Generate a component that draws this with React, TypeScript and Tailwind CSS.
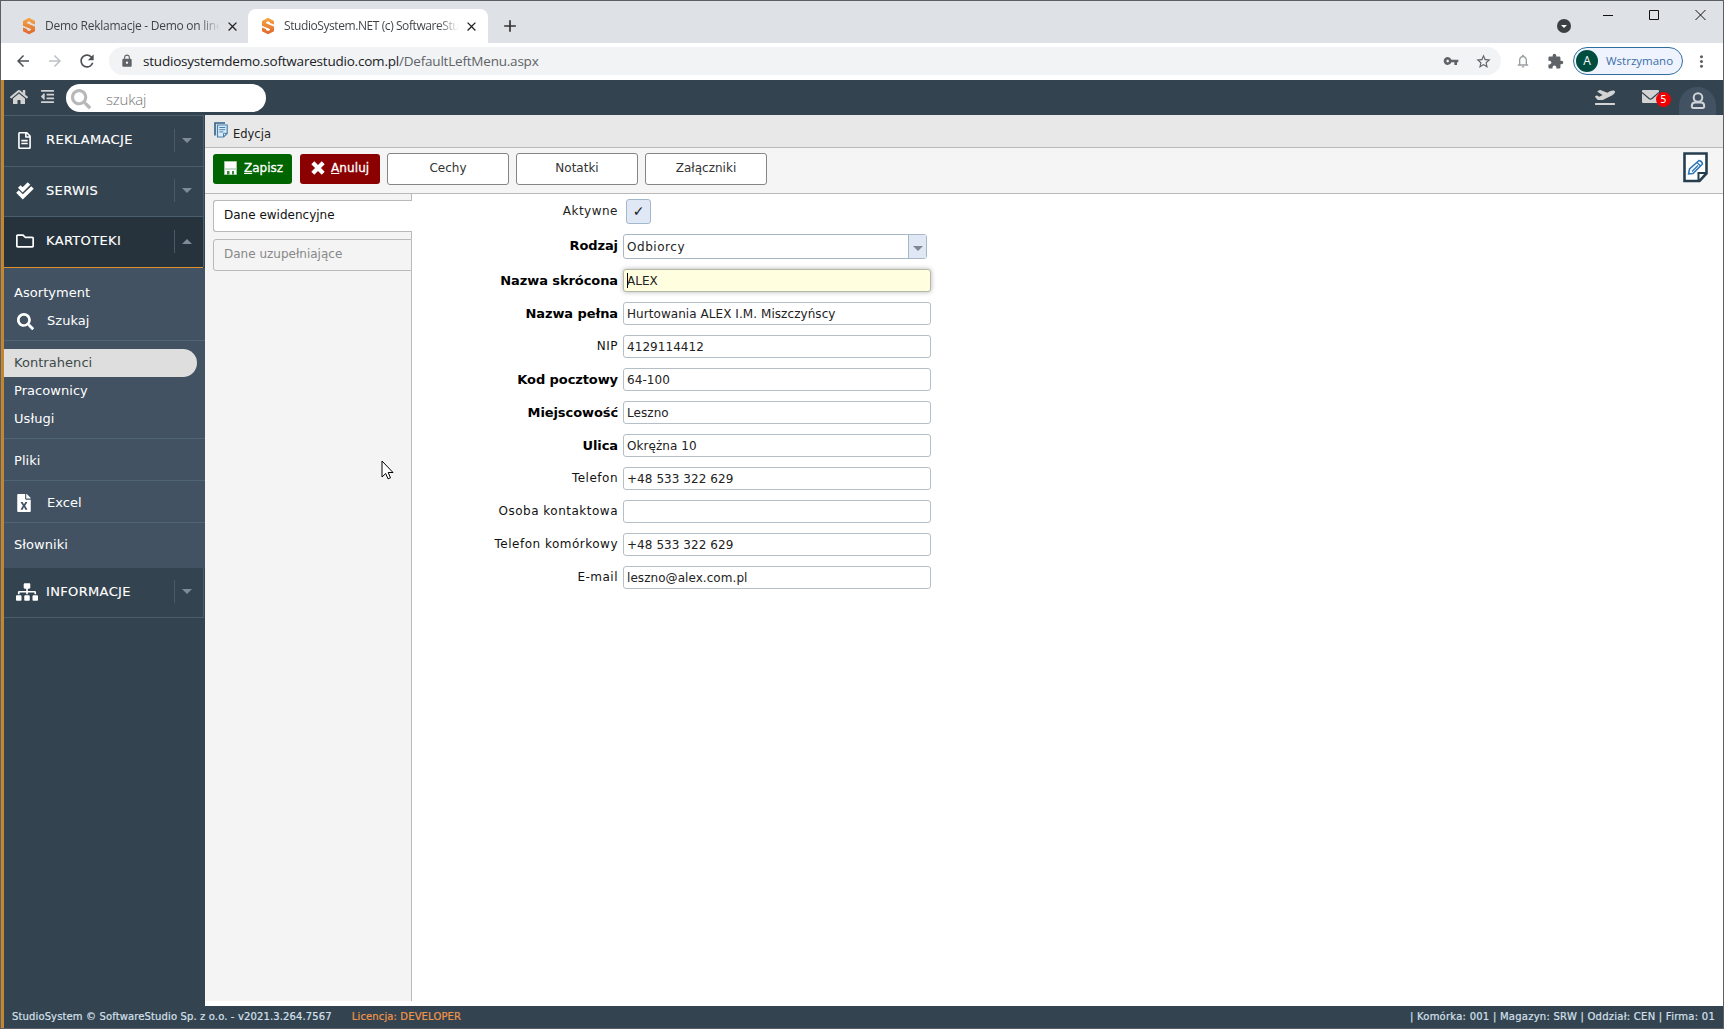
import type { ReactNode } from 'react'
import { clsx } from 'clsx'
import { FaHome, FaOutdent, FaSearch, FaRegFileAlt, FaRegFolder, FaSitemap, FaFileExcel, FaPlaneDeparture } from 'react-icons/fa'
import { MdArrowBack, MdArrowForward, MdExtension, MdLock, MdMoreVert, MdNotificationsNone, MdRefresh, MdStarBorder, MdVpnKey, MdClose, MdAdd } from 'react-icons/md'

type Field = { label: string; value: string; bold?: boolean }

const FIELDS: Field[] = [
  { label: 'Nazwa pełna', value: 'Hurtowania ALEX I.M. Miszczyńscy', bold: true },
  { label: 'NIP', value: '4129114412' },
  { label: 'Kod pocztowy', value: '64-100', bold: true },
  { label: 'Miejscowość', value: 'Leszno', bold: true },
  { label: 'Ulica', value: 'Okrężna 10', bold: true },
  { label: 'Telefon', value: '+48 533 322 629' },
  { label: 'Osoba kontaktowa', value: '' },
  { label: 'Telefon komórkowy', value: '+48 533 322 629' },
  { label: 'E-mail', value: 'leszno@alex.com.pl' },
]

function StudioLogo() {
  return (
    <svg width="14" height="18" viewBox="0 0 14 18" className="shrink-0" fill="none">
      <defs>
        <linearGradient id="logo" x1="0" y1="0" x2="0" y2="1">
          <stop offset="0" stopColor="#f5a742" />
          <stop offset="1" stopColor="#e0662b" />
        </linearGradient>
      </defs>
      <path d="M7 .8 13 4v3.500L9 6V5.200L7 4.300 5 5.200v1L13 9.500v4.700L7 17.300 1 14.200V10.500L5 12v1l2 .9 2-.9v-.9L1 8.700V4Z" fill="url(#logo)" />
    </svg>
  )
}

function DoubleCheckIcon() {
  return (
    <svg width="18" height="18" viewBox="0 0 18 18" fill="none" stroke="#fff" strokeWidth="3.700">
      <path d="M3.300 4.500 6.600 7.800 13 1.500" />
      <path d="M1.500 9.500 6.800 14.800 16.500 5.500" />
    </svg>
  )
}

function UserIcon() {
  return (
    <svg width="16" height="18" viewBox="0 0 16 18" fill="none" stroke="#d0d4d8" strokeWidth="2">
      <circle cx="8" cy="5.500" r="4.300" />
      <path d="M4.800 10.500h6.400c2 0 3 1.700 3 3.500 0 1.500-.6 2-1.600 2H3.400c-1 0-1.600-.5-1.600-2 0-1.800 1-3.500 3-3.500Z" />
    </svg>
  )
}

function MailIcon() {
  return (
    <svg width="17" height="13" viewBox="0 0 17 13" className="-mt-[3px]">
      <rect width="17" height="13" rx="1" fill="#d3d3d3" />
      <path d="M0 2.500 7 8.500q1.500 1.100 3 0l7-6" fill="none" stroke="#33434f" strokeWidth="1.200" />
    </svg>
  )
}

function PagesIcon() {
  return (
    <svg width="14" height="16" viewBox="0 0 14 16" fill="none">
      <path d="M1 13.500V1h10" stroke="#2f5f86" strokeWidth="1.600" />
      <path d="M3.500 3h9.700v8.500L9.700 15H3.500Z" fill="#d8ebfa" stroke="#4a80ab" strokeWidth="1.200" />
      <path d="M5.300 5.500h6M5.300 7.700h6M5.300 9.900h4" stroke="#4a80ab" />
      <path d="M9.500 15v-3.700h3.700" stroke="#4a80ab" />
    </svg>
  )
}

function FloppyIcon() {
  return (
    <svg width="13" height="14" viewBox="0 0 13 14">
      <path d="M.5.500h12v13H.5Z" fill="#fff" stroke="#a5c9a5" />
      <path d="M1 8h11" stroke="#8fbb8f" />
      <path d="M3 10h7v3.500H3Z" fill="#3f863f" />
      <path d="M5.500 10H8v3.500H5.500Z" fill="#fff" />
    </svg>
  )
}

function EditNoteIcon() {
  return (
    <svg width="25" height="31" viewBox="0 0 25 31" fill="none">
      <path d="M1.500 1.500h22v20l-7 7.500h-15Z" fill="#fff" stroke="#263f4f" strokeWidth="2.600" />
      <path d="M15.500 29v-8h8" stroke="#263f4f" strokeWidth="2" />
      <path d="m5.500 22 1-5L16 8.500q3 .5 3.500 3.500L10 21.500Z" fill="#f2f9ff" stroke="#2e75b6" strokeWidth="1.500" />
      <path d="m14 10.500 3.500 3.500M9 19.500l6-6" stroke="#2e75b6" strokeWidth="1.200" />
    </svg>
  )
}

function Triangle({ up, className }: { up?: boolean; className?: string }) {
  return (
    <svg width="10" height="5" viewBox="0 0 10 5" className={className} fill="currentColor">
      <path d={up ? 'M0 5 5 0l5 5Z' : 'M0 0h10L5 5Z'} />
    </svg>
  )
}

function BrowserTab({ title, active }: { title: string; active?: boolean }) {
  return (
    <div
      className={clsx(
        'flex h-[34px] items-center',
        active ? 'w-[240px] rounded-t-lg bg-white pl-[13px] tracking-[-0.42px]' : 'w-[247px] pl-[21px] tracking-[-0.26px]',
      )}
    >
      <StudioLogo />
      <div className="ml-[9px] w-[175px] whitespace-nowrap bg-linear-to-r from-[#3c4043] from-88% to-transparent bg-clip-text text-[12px] text-transparent">
        {title}
      </div>
      <MdClose className="ml-[5px] size-[15px] shrink-0 text-[#222]" />
    </div>
  )
}

function BrowserChrome() {
  return (
    <div className="shrink-0 font-['Open_Sans',sans-serif]">
      <div className="flex h-[42px] bg-[#dee1e6] pt-2">
        <BrowserTab title="Demo Reklamacje - Demo on line" />
        <BrowserTab title="StudioSystem.NET (c) SoftwareStu" active />
        <MdAdd className="mt-[7px] ml-[12px] size-[20px] text-[#333]" />
        <div className="ml-auto flex pr-[17px]">
          <div className="mt-[10px] mr-[32px] flex size-[14px] items-center justify-center rounded-full bg-[#3c4043] text-white">
            <Triangle className="w-[6px]" />
          </div>
          <svg width="103" height="12" viewBox="0 0 103 12" fill="none" stroke="#111">
            <path d="M0 6.500h10M92.500 1l10 10M102.500 1l-10 10" />
            <path d="M46.500 1.500h9v9h-9Z" />
          </svg>
        </div>
      </div>
      <div className="flex h-[37px] items-center bg-white pb-[1px] text-[#5f6368]">
        <MdArrowBack className="ml-[13px] size-[18px] text-[#4d5156]" />
        <MdArrowForward className="ml-[14px] size-[18px] text-[#bdc1c6]" />
        <MdRefresh className="ml-[13px] size-[20px] text-[#4d5156]" />
        <div className="ml-[12px] flex h-[28px] w-[1392px] items-center rounded-full bg-[#f1f3f4] pr-[9px] pl-[11px]">
          <MdLock className="size-[14px]" />
          <div className="ml-[9px] text-[13.500px] tracking-[-0.21px] whitespace-nowrap">
            <span className="text-[#202124]">studiosystemdemo.softwarestudio.com.pl</span>/DefaultLeftMenu.aspx
          </div>
          <MdVpnKey className="ml-auto size-[16px]" />
          <MdStarBorder className="ml-[16px] size-[17px]" />
        </div>
        <MdNotificationsNone className="ml-[14px] size-[16px] text-[#9a9da1]" />
        <MdExtension className="ml-[16px] size-[17px]" />
        <div className="ml-[9px] flex h-[28px] w-[110px] items-center rounded-full border border-[#2f6f9f] bg-[#eef3fd] pl-[2px]">
          <div className="flex size-[22px] items-center justify-center rounded-full bg-[#004d40] text-[12px] text-white">A</div>
          <span className="ml-[8px] text-[11.500px] text-[#3a6ea8]">Wstrzymano</span>
        </div>
        <MdMoreVert className="ml-[9px] size-[19px]" />
      </div>
    </div>
  )
}

function AppHeader() {
  return (
    <header className="flex h-[35px] shrink-0 items-center bg-[#33434f] text-[#d3d3d3]">
      <FaHome className="-mt-[2px] ml-[6px] size-[18px]" />
      <FaOutdent className="-mt-[2px] ml-[12px] size-[15px]" />
      <div className="ml-[11px] flex h-[28px] w-[200px] items-center rounded-full bg-white pl-[5px]">
        <FaSearch className="mt-[2px] size-[20px] text-[#b8b8b8]" />
        <span className="ml-[15px] pt-[3px] font-['Open_Sans',sans-serif] text-[15px] font-light tracking-[-0.2px] text-[#757575]">szukaj</span>
      </div>
      <FaPlaneDeparture className="-mt-[2px] ml-auto size-[20px]" />
      <div className="ml-[27px] flex items-center">
        <MailIcon />
        <span className="z-10 mt-[3px] -ml-[3px] flex size-[15px] items-center justify-center rounded-full bg-[#f00000] text-[10px] text-white">5</span>
      </div>
      <div className="mt-[7px] mr-[7px] ml-[8px] flex h-[28px] w-[37px] items-center justify-center rounded-t-full bg-[#425262]">
        <UserIcon />
      </div>
    </header>
  )
}

function MenuSection({ icon, label, open, className }: { icon: ReactNode; label: string; open?: boolean; className: string }) {
  return (
    <div className={clsx('flex w-[200px] items-center border-r border-r-[#495d6c] pb-[2px] text-white', className)}>
      <div className="ml-[12px] flex w-[30px] shrink-0">{icon}</div>
      <span className="text-[13px] tracking-[0.35px] [-webkit-text-stroke:0.15px]">{label}</span>
      <div className="mr-[4px] ml-auto flex h-[23px] w-[25px] items-center justify-center border-l border-[#4a5a67] text-[#7f8c97]">
        <Triangle up={open} />
      </div>
    </div>
  )
}

function MenuItem({ label, icon, selected }: { label: string; icon?: ReactNode; selected?: boolean }) {
  return (
    <div
      className={clsx(
        'flex h-[28px] items-center pl-[10px] text-[13px] tracking-[0.05px]',
        selected ? 'mr-[8px] rounded-r-full bg-[#dedede] text-[#3c4a4a]' : 'text-white',
      )}
    >
      {icon && <div className="ml-[3px] w-[30px]">{icon}</div>}
      {label}
    </div>
  )
}

function Sidebar() {
  return (
    <nav className="flex w-[201px] shrink-0 flex-col bg-[#33434f]">
      <MenuSection icon={<FaRegFileAlt className="size-[17px]" />} label="REKLAMACJE" className="h-[51px] border-t border-t-[#495d6c]" />
      <MenuSection icon={<DoubleCheckIcon />} label="SERWIS" className="h-[50px] border-t border-t-[#495d6c]" />
      <MenuSection icon={<FaRegFolder className="size-[18px]" />} label="KARTOTEKI" open className="h-[51px] border-t border-t-[#495d6c] bg-[#26323c]" />
      <div className="h-px w-[199px] shrink-0 bg-[#e0902c]" />
      <div className="flex h-[300px] flex-col bg-[#425262]">
        <div className="h-[73px] border-b border-[#4f6574] pt-[11px]">
          <MenuItem label="Asortyment" />
          <MenuItem label="Szukaj" icon={<FaSearch className="size-[17px]" />} />
        </div>
        <div className="h-[98px] border-b border-[#4f6574] pt-[8px]">
          <MenuItem label="Kontrahenci" selected />
          <MenuItem label="Pracownicy" />
          <MenuItem label="Usługi" />
        </div>
        <div className="h-[42px] border-b border-[#4f6574] pt-[8px]">
          <MenuItem label="Pliki" />
        </div>
        <div className="h-[42px] border-b border-[#4f6574] pt-[8px]">
          <MenuItem label="Excel" icon={<FaFileExcel className="h-[18px] w-[14px]" />} />
        </div>
        <div className="pt-[8px]">
          <MenuItem label="Słowniki" />
        </div>
      </div>
      <MenuSection icon={<FaSitemap className="size-[22px]" />} label="INFORMACJE" className="h-[50px] border-b border-b-[#495d6c]" />
    </nav>
  )
}

function ActionBar() {
  const plain = 'flex h-[32px] w-[122px] justify-center rounded-[3px] border border-[#858585] bg-white pt-[5px] text-[12px] text-[#333]'
  return (
    <div className="flex h-[46px] shrink-0 border-b border-[#b9b9b9] bg-[#f5f5f5] pt-[5px] pl-[8px]">
      <button className="mt-px flex h-[30px] w-[79px] items-center rounded-[3px] bg-[#006400] pb-[2px] pl-[11px] text-[12px] text-white [-webkit-text-stroke:0.3px]">
        <FloppyIcon />
        <span className="ml-[7px]"><u>Z</u>apisz</span>
      </button>
      <button className="mt-px ml-[8px] flex h-[30px] w-[80px] items-center rounded-[3px] bg-[#8b0000] pb-[2px] pl-[11px] text-[12px] text-white [-webkit-text-stroke:0.3px]">
        <svg width="14" height="14" viewBox="0 0 14 14" stroke="#fff" strokeWidth="4.200">
          <path d="m1.800 1.800 10.400 10.400M12.200 1.800 1.800 12.200" />
        </svg>
        <span className="ml-[6px] tracking-[0.1px]"><u>A</u>nuluj</span>
      </button>
      <button className={clsx(plain, 'ml-[7px]')}>Cechy</button>
      <button className={clsx(plain, 'ml-[7px]')}>Notatki</button>
      <button className={clsx(plain, 'ml-[7px]')}>Załączniki</button>
      <div className="-mt-px mr-[15px] ml-auto"><EditNoteIcon /></div>
    </div>
  )
}

function SideTabs() {
  return (
    <div className="flex h-[807px] w-[207px] shrink-0 flex-col bg-[#f4f4f4] pl-[8px]">
      <div className="h-[6px] border-r border-[#b9b9b9]" />
      <div className="h-[32px] rounded-l-[3px] border border-r-0 border-[#b9b9b9] bg-white pt-[5px] pl-[10px] text-[12px] text-[#111]">Dane ewidencyjne</div>
      <div className="h-[7px] border-r border-[#b9b9b9]" />
      <div className="h-[32px] rounded-l-[3px] border border-[#b9b9b9] pt-[5px] pl-[10px] text-[12px] text-[#888]">Dane uzupełniające</div>
      <div className="grow border-r border-[#b9b9b9]" />
    </div>
  )
}

function FormRow({ label, bold, children }: { label: string; bold?: boolean; children: ReactNode }) {
  return (
    <div className="flex h-[33px]">
      <label className={clsx('w-[206px] pt-[2px] text-right', bold ? 'text-[13px] font-bold tracking-[-0.09px] text-black' : 'text-[12px] tracking-[0.5px] text-[#111]')}>{label}</label>
      <div className="ml-[5px]">{children}</div>
    </div>
  )
}

function EditForm() {
  return (
    <div className="grow bg-white pt-[5px] text-[12px] text-[#222]">
      <div className="flex h-[35px]">
        <span className="w-[206px] pt-[3px] text-right tracking-[0.5px]">Aktywne</span>
        <span className="ml-[8px] flex h-[25px] w-[25px] items-center justify-center rounded-[3px] border border-[#a3b8cc] bg-[#e0e8f5] text-[14px]">✓</span>
      </div>
      <FormRow label="Rodzaj" bold>
        <div className="flex h-[25px] w-[304px] rounded-[3px] border border-[#a9b7c4]">
          <span className="grow pt-[3px] pl-[3px] tracking-[0.55px]">Odbiorcy</span>
          <span className="flex w-[18px] items-center justify-center border-l border-[#a9b7c4] bg-[#e0e8f5] pt-[3px] text-[#7f8790]"><Triangle /></span>
        </div>
      </FormRow>
      <div className="mt-[2px]">
        <FormRow label="Nazwa skrócona" bold>
          <div className="flex h-[23px] w-[308px] items-center rounded-[3px] border border-[#b3b8a8] bg-[#ffffe0] pl-[3px] shadow-[0_0_5px_rgba(0,0,0,0.3)]">
            <span className="-mr-px h-[15px] w-px bg-black" />ALEX
          </div>
        </FormRow>
        {FIELDS.map((f) => (
          <FormRow key={f.label} label={f.label} bold={f.bold}>
            <div className="flex h-[23px] w-[308px] items-center rounded-[3px] border border-[#b5bfc7] pl-[3px] tracking-[0.06px]">{f.value}</div>
          </FormRow>
        ))}
      </div>
    </div>
  )
}

// Pointer resting over the side tab panel
function Cursor() {
  return (
    <svg width="13" height="20" viewBox="0 0 13 20" className="absolute top-[459px] left-[380px]">
      <path d="M1 1v16l3.700-3.500 2.300 5.300 2.500-1-2.300-5.300H12Z" fill="#fff" stroke="#000" />
    </svg>
  )
}

function StatusBar() {
  return (
    <footer className="flex h-[22px] shrink-0 items-center bg-[#33434f] px-[8px] pb-px text-[10px] tracking-[0.13px] whitespace-pre text-[#d5e0ec] [-webkit-text-stroke:0.2px]">
      <span>StudioSystem © SoftwareStudio Sp. z o.o. - v2021.3.264.7567</span>
      <span className="ml-[20px] text-[#f0954a]">Licencja: DEVELOPER</span>
      <span className="ml-auto tracking-[0.25px]">| Komórka: 001 | Magazyn: SRW | Oddział: CEN | Firma: 01</span>
    </footer>
  )
}

export default function App() {
  return (
    <div className="relative flex h-[1029px] w-[1724px] flex-col overflow-hidden border border-[#5b5f66] bg-white font-['DejaVu_Sans',sans-serif]">
      <BrowserChrome />
      <div className="flex min-h-0 grow flex-col border-l-3 border-[#c4862f]">
        <AppHeader />
        <div className="flex min-h-0 grow">
          <Sidebar />
          <main className="flex min-w-0 grow flex-col">
            <div className="flex h-[33px] shrink-0 border-b border-[#b9b9b9] bg-[#e8e8e8] pt-[7px] pl-[9px]">
              <PagesIcon />
              <span className="ml-[5px] pt-[4px] text-[11.500px] leading-[17px] text-[#222]">Edycja</span>
            </div>
            <ActionBar />
            <div className="flex min-h-0 grow">
              <SideTabs />
              <EditForm />
            </div>
          </main>
        </div>
        <StatusBar />
      </div>
      <Cursor />
    </div>
  )
}
